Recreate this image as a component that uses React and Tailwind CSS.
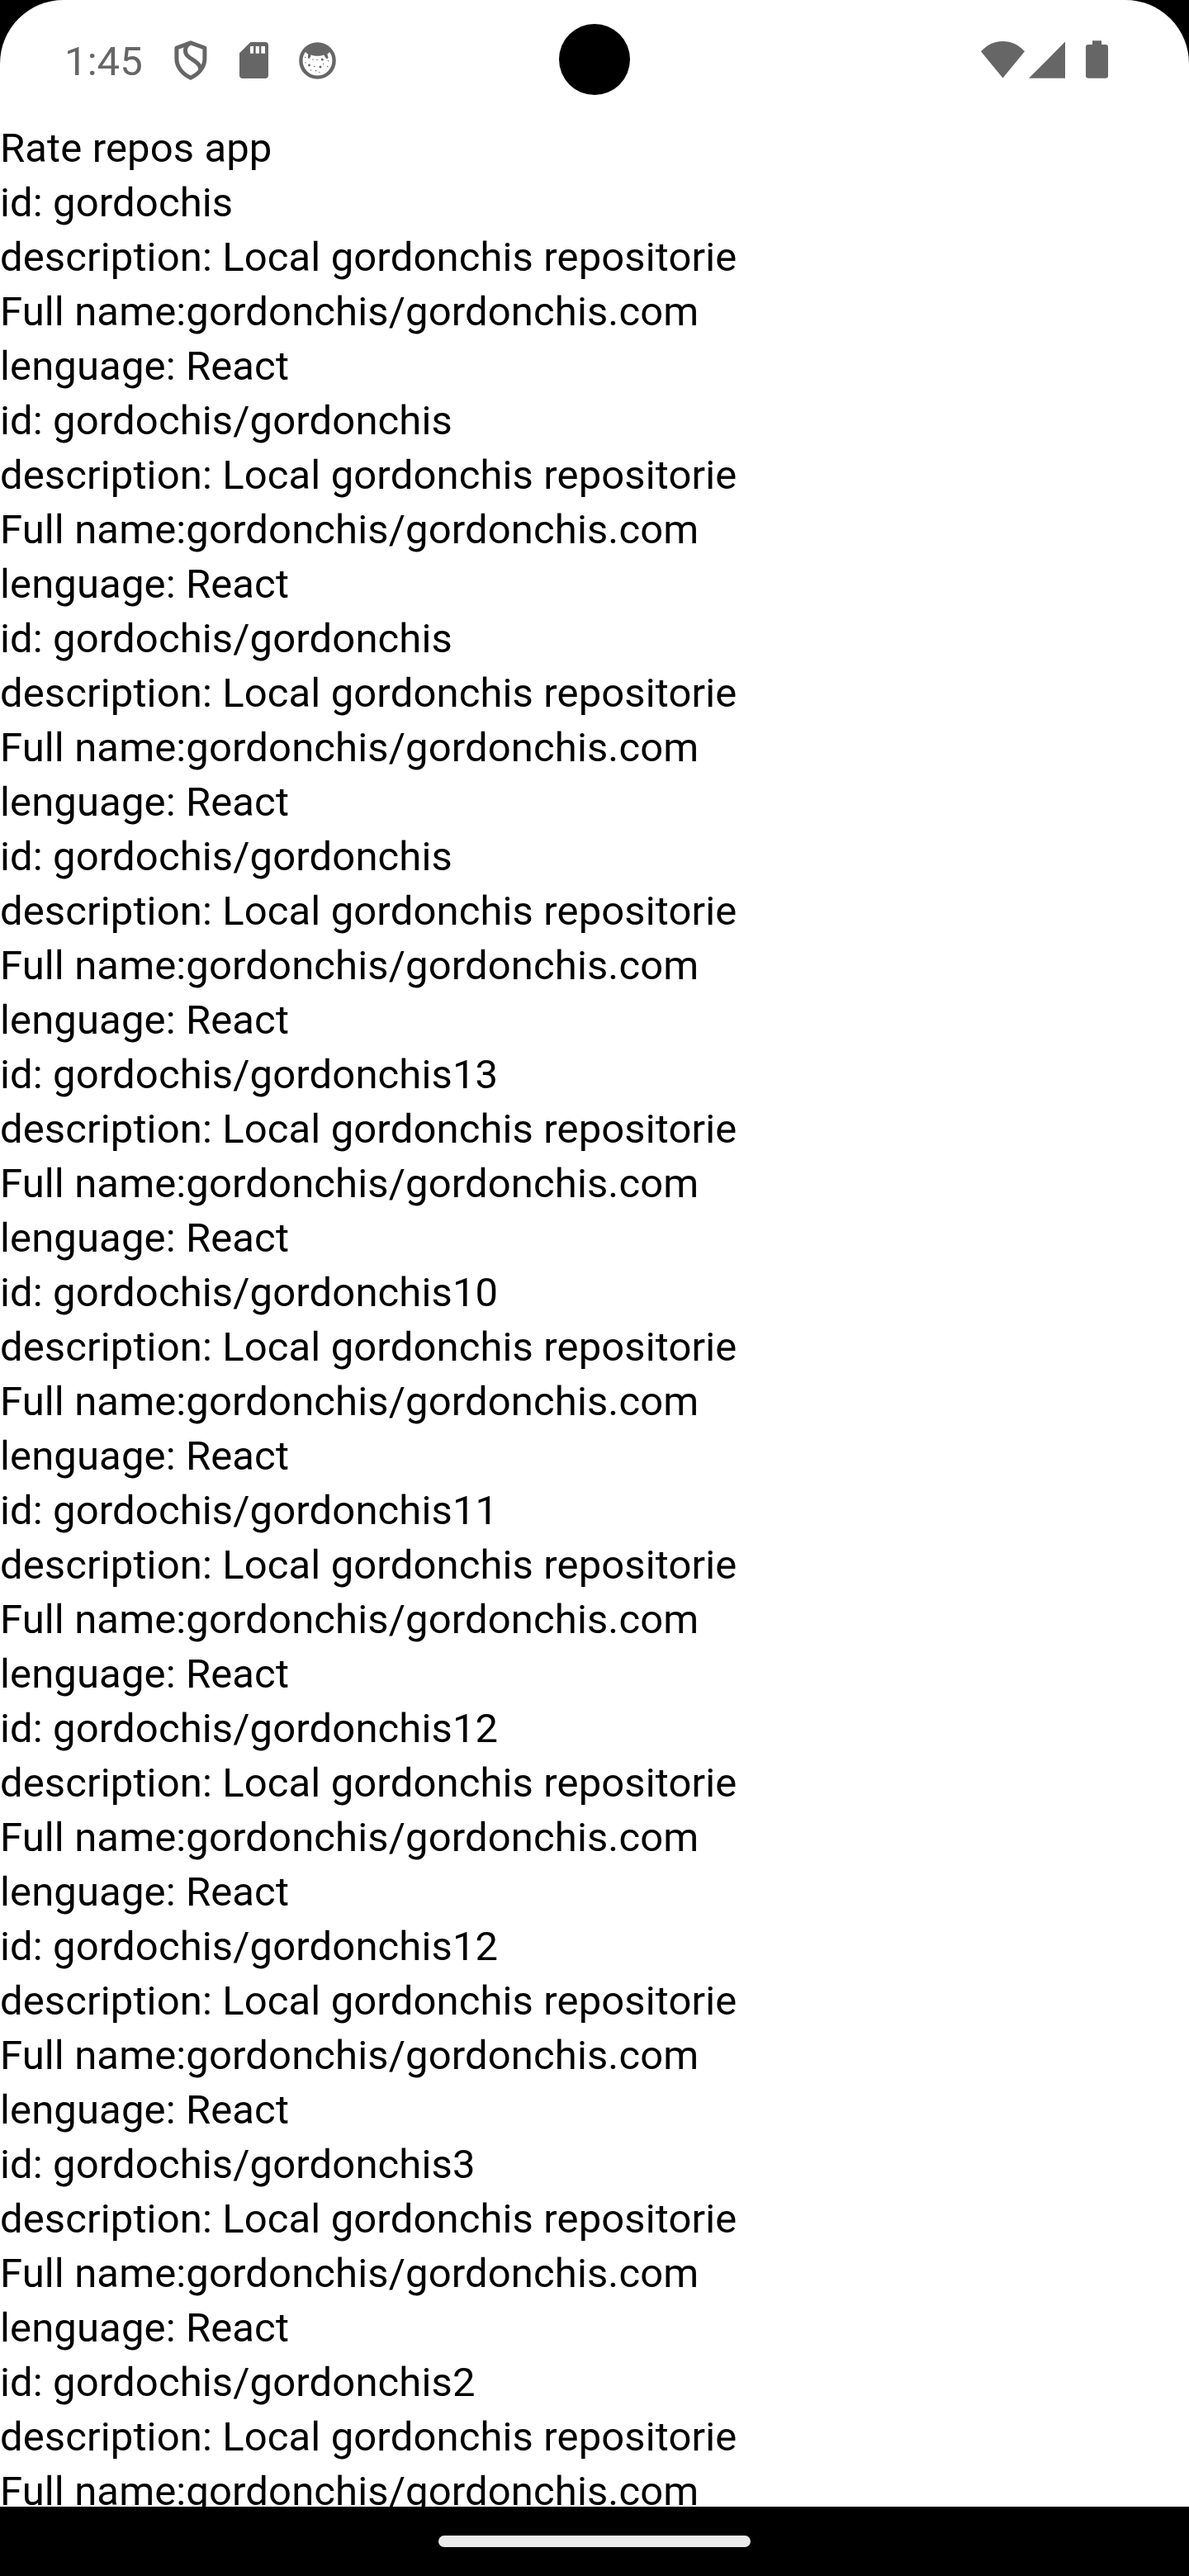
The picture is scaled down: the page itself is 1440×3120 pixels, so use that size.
import React from "react";

const repos = [
  "gordochis",
  "gordochis/gordonchis",
  "gordochis/gordonchis",
  "gordochis/gordonchis",
  "gordochis/gordonchis13",
  "gordochis/gordonchis10",
  "gordochis/gordonchis11",
  "gordochis/gordonchis12",
  "gordochis/gordonchis12",
  "gordochis/gordonchis3",
  "gordochis/gordonchis2",
];

function ShieldIcon() {
  return (
    <svg className="ml-[38.6px] h-[48px] w-[40px]" viewBox="0 0 40 48" fill="none" stroke="currentColor" strokeWidth="5" strokeLinejoin="round">
      <path d="M19.9 2.8 L36.9 9 V22 C36.9 31.5 30.5 40.5 19.9 45.2 C9.2 40.5 2.9 31.5 2.9 22 V9 Z" />
      <path d="M18.5 3.6 C12.3 7.5 12 15 16.5 19 C21 23 28 26 30.5 30.5 C31.8 33 32 34.5 31.5 37" />
    </svg>
  );
}

function SdCardIcon() {
  return (
    <svg className="ml-[39px] h-[44px] w-[35px]" viewBox="0 0 35 44" fill="currentColor">
      <path fillRule="evenodd" d="M13.5 0 H31 A4 4 0 0 1 35 4 V40 A4 4 0 0 1 31 44 H4 A4 4 0 0 1 0 40 V13.3 Z M13 5 V13.7 H17 V5 Z M19.7 5 V13.7 H24 V5 Z M26.3 5 V13.7 H31 V5 Z" />
    </svg>
  );
}

function CatIcon() {
  return (
    <svg className="ml-[37px] h-[45px] w-[45px]" viewBox="0 0 45 45" fill="currentColor">
      <circle cx="22.5" cy="22.5" r="20.1" fill="none" stroke="currentColor" strokeWidth="4.4" />
      <path d="M5 12 C9 5 15 1.5 22.5 1.5 C30 1.5 36 5 40 12 L37.5 11.3 C36.5 13 35.3 14 34.3 14.6 L35.6 18.8 C35.2 20.3 33.3 20.5 32.5 19.3 L30.3 15.5 C26 17.2 19 17.2 14.7 15.5 L13.3 19.3 C12.5 20.5 10.8 20 10.8 18.8 L11.3 14.8 C10 14 8.5 12.8 7.5 11 Z" />
      <circle cx="28.3" cy="21" r="1.5" />
      <circle cx="12.5" cy="28" r="1.4" />
      <circle cx="26" cy="30" r="1.5" />
      <circle cx="18.8" cy="29.5" r="0.8" />
      <circle cx="22" cy="21.5" r="0.7" />
      <circle cx="17" cy="21" r="0.7" />
      <circle cx="7.7" cy="18.5" r="0.8" />
      <circle cx="8" cy="25" r="0.7" />
      <circle cx="29.5" cy="26.5" r="0.7" />
      <circle cx="34.7" cy="29.5" r="0.8" />
      <circle cx="35.5" cy="22.5" r="0.7" />
      <circle cx="20.5" cy="34.7" r="0.8" />
      <circle cx="14.5" cy="34" r="0.7" />
      <circle cx="25" cy="36.5" r="0.7" />
    </svg>
  );
}

function SystemIcons() {
  return (
    <div className="mb-[3px] mr-[98px] flex items-end">
      <svg className="h-[45px] w-[53px]" viewBox="0 0 53 45" fill="currentColor">
        <path d="M0 12.3 C7.5 4 16.5 0 26.5 0 C36.5 0 45.5 4 53 12.3 L26.5 44.5 Z" />
      </svg>
      <svg className="ml-[5px] h-[45px] w-[44px]" viewBox="0 0 44 45" fill="currentColor">
        <path d="M44 0.6 V44.7 H0 Z" />
      </svg>
      <svg className="ml-[25px] h-[46px] w-[27px]" viewBox="0 0 27 46" fill="currentColor">
        <path d="M8 0.3 H19 V5 H24 A3 3 0 0 1 27 8 V42.7 A3 3 0 0 1 24 45.7 H3 A3 3 0 0 1 0 42.7 V8 A3 3 0 0 1 3 5 H8 Z" />
      </svg>
    </div>
  );
}

function StatusBar() {
  return (
    <header className="relative h-[147px] shrink-0 bg-black text-[#666666]">
      <div className="flex h-full items-start justify-between rounded-t-[77px] bg-white">
        <div className="flex h-[146px] items-center pl-[78px]">
          <span className="mt-1 tracking-[0.1px]">1:45</span>
          <ShieldIcon />
          <SdCardIcon />
          <CatIcon />
        </div>
        <div className="flex h-[146px] items-center">
          <SystemIcons />
        </div>
      </div>
      {/* front camera cutout */}
      <div className="absolute left-[677px] top-[29px] h-[86px] w-[86px] rounded-full bg-black" />
    </header>
  );
}

function RepoItem({ id }) {
  return (
    <li>
      <p>id: {id}</p>
      <p>description: Local gordonchis repositorie</p>
      <p>Full name:gordonchis/gordonchis.com</p>
      <p>lenguage: React</p>
    </li>
  );
}

export default function App() {
  return (
    <div className="flex h-[3120px] w-[1440px] flex-col overflow-hidden bg-white font-['Roboto',sans-serif] text-[49px] leading-[66px]">
      <StatusBar />
      <main className="min-h-0 flex-1 overflow-hidden tracking-[0.125px] text-black">
        <h1>Rate repos app</h1>
        <ul>
          {repos.map((id, i) => (
            <RepoItem key={i} id={id} />
          ))}
        </ul>
      </main>
      <footer className="flex h-[84px] shrink-0 items-center justify-center bg-black">
        <div className="h-[14px] w-[378px] rounded-full bg-[#ebebeb]" />
      </footer>
    </div>
  );
}
